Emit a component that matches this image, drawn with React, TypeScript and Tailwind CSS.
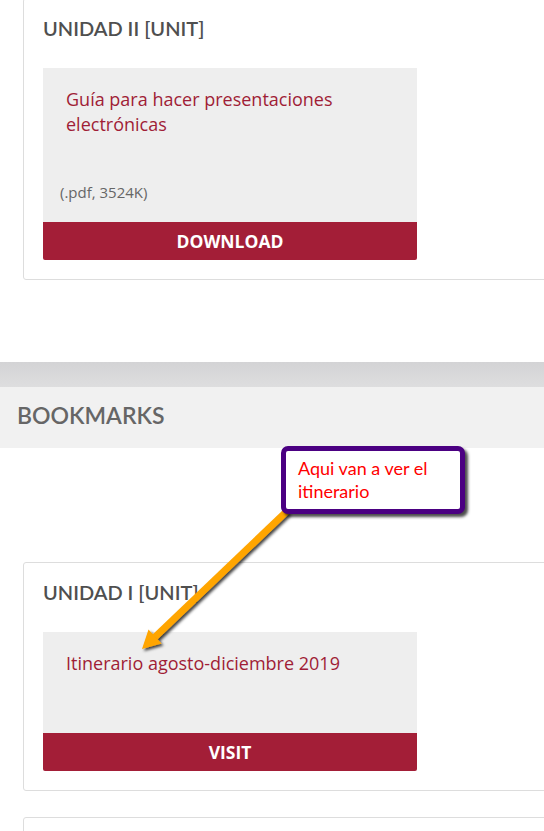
const maroon = 'bg-[#a31e37]'

const Resource = ({
  unit,
  title,
  meta,
  action,
  bodyHeight,
}: {
  unit: string
  title: string
  meta?: string
  action: string
  bodyHeight: string
}) => {
  return (
    <div className="ml-[23px] mr-[-12px] rounded-[3px] border border-[#dddddd] pl-[19px] pt-[16px] pb-[19px]">
      <h3 className="font-['Lato',sans-serif] text-[20px] leading-[26px] font-semibold text-[#4f4f4f]">
        {unit}
      </h3>

      <div className="mt-[27px] w-[374px]">
        <div className={`flex flex-col bg-[#eeeeee] ${bodyHeight}`}>
          <a className="pl-[23px] pr-[20px] pt-[19px] font-['Open_Sans',sans-serif] text-[18px] leading-[25px] text-[#a01d36]">
            {title}
          </a>
          {meta && (
            <p className="mt-auto mb-[20px] pl-[17px] font-['Open_Sans',sans-serif] text-[15px] leading-[20px] text-[#666666]">
              {meta}
            </p>
          )}
        </div>
        <button
          className={`flex h-[38px] w-full items-center justify-center rounded-b-[2px] ${maroon} font-['Open_Sans',sans-serif] text-[17.5px] font-bold uppercase text-white`}
        >
          {action}
        </button>
      </div>
    </div>
  )
}

// the annotation someone drew on top of the screenshot
const Callout = () => {
  return (
    <>
      <svg
        className="pointer-events-none absolute left-0 top-0 h-[831px] w-[544px]"
        viewBox="0 0 544 831"
      >
        <defs>
          <filter id="shadow" x="-20%" y="-20%" width="140%" height="140%">
            <feDropShadow dx="2" dy="2" stdDeviation="1.5" floodColor="#000" floodOpacity="0.75" />
          </filter>
        </defs>
        <g filter="url(#shadow)">
          <line x1="287" y1="511" x2="155" y2="637" stroke="#ffa500" strokeWidth="7" />
          <polygon points="142,649 161.5,643.5 148.5,629.5" fill="#ffa500" />
        </g>
      </svg>

      <div className="absolute left-[281px] top-[446px] h-[68px] w-[184px] rounded-[7px] border-[5px] border-[#4b0082] bg-white pl-[12px] pt-[6px] shadow-[3px_3px_3px_rgba(0,0,0,0.7)]">
        <p className="font-['Lato',sans-serif] text-[18px] leading-[23px] text-[#ff0000]">
          Aqui van a ver el
          <br />
          itinerario
        </p>
      </div>
    </>
  )
}

export default function App() {
  return (
    <div className="relative h-[831px] w-full overflow-hidden bg-white">
      <div className="-mt-[2px]">
        <Resource
          unit="UNIDAD II [UNIT]"
          title="Guía para hacer presentaciones electrónicas"
          meta="(.pdf, 3524K)"
          action="Download"
          bodyHeight="h-[154px]"
        />
      </div>

      <div className="mt-[82px] h-[25px] bg-gradient-to-b from-[#d3d3d5] to-[#dededf]" />
      <div className="h-[61px] bg-[#f1f1f1] pl-[17px] pt-[15px]">
        <h2 className="font-['Lato',sans-serif] text-[23px] leading-[26px] font-semibold text-[#666666]">
          BOOKMARKS
        </h2>
      </div>

      <div className="mt-[114px]">
        <Resource
          unit="UNIDAD I [UNIT]"
          title="Itinerario agosto-diciembre 2019"
          action="Visit"
          bodyHeight="h-[101px]"
        />
      </div>

      <div className="ml-[23px] mr-[-12px] mt-[26px] h-[60px] rounded-[3px] border border-[#dddddd]" />

      <Callout />
    </div>
  )
}
